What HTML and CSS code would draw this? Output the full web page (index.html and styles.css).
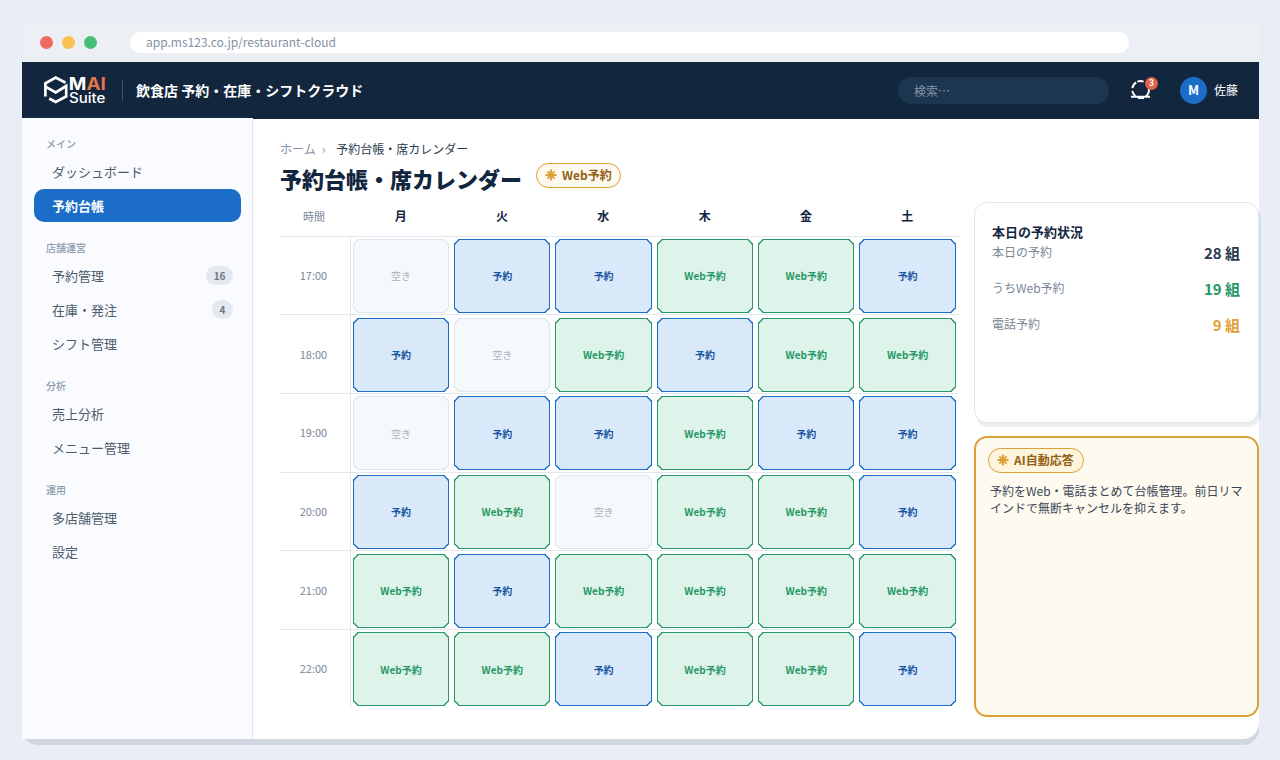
FILE: index.html
```html
<!DOCTYPE html>
<html lang="ja">
<head>
<meta charset="utf-8">
<title>予約台帳・席カレンダー</title>
<link rel="stylesheet" href="styles.css">
</head>
<body>
<div class="window">
  <div class="chrome">
    <i class="dot red"></i><i class="dot yellow"></i><i class="dot green"></i>
    <div class="url">app.ms123.co.jp/restaurant-cloud</div>
  </div>
  <header class="topbar">
    <svg class="logo" width="64" height="32" viewBox="0 0 64 32">
      <g fill="none" stroke="#fff" stroke-width="2.7">
        <path d="M23.6 8.8 13.7 3.6 3.4 9.3v13.2"/>
        <path d="M3.4 12.6 13.7 18.4 24.2 12v10.4L13.7 28 7.2 24.5"/>
      </g>
      <text class="logo-mai" x="26.8" y="16.2" textLength="37" lengthAdjust="spacingAndGlyphs">M<tspan fill="#e0784a">AI</tspan></text>
      <text class="logo-suite" x="27" y="29.3" textLength="36.4" lengthAdjust="spacingAndGlyphs">Suite</text>
    </svg>
    <i class="divider"></i>
    <div class="product">飲食店 予約・在庫・シフトクラウド</div>
    <div class="search">検索…</div>
    <div class="bell">
      <svg width="22" height="22" viewBox="0 0 22 22" fill="none" stroke="#fff" stroke-width="1.9">
        <path d="M2.3 9.2A8.4 8.4 0 0 1 6.2 3.4M7.4 2.6a8.4 8.4 0 0 1 6.2 0M18.8 9.4a8.4 8.4 0 0 1-2.8 7.8M2.3 11.8a8.4 8.4 0 0 0 3 5.2M1 17.7h19M8 19h6"/>
      </svg>
      <span class="count">3</span>
    </div>
    <div class="avatar">M</div>
    <div class="user">佐藤</div>
  </header>
  <div class="body">
    <nav class="sidebar">
      <div class="group">
        <div class="label">メイン</div>
        <div class="item">ダッシュボード</div>
        <div class="item active">予約台帳</div>
      </div>
      <div class="group">
        <div class="label">店舗運営</div>
        <div class="item">予約管理<span class="badge">16</span></div>
        <div class="item">在庫・発注<span class="badge">4</span></div>
        <div class="item">シフト管理</div>
      </div>
      <div class="group">
        <div class="label">分析</div>
        <div class="item">売上分析</div>
        <div class="item">メニュー管理</div>
      </div>
      <div class="group">
        <div class="label">運用</div>
        <div class="item">多店舗管理</div>
        <div class="item">設定</div>
      </div>
    </nav>
    <main class="main">
      <div class="crumbs"><span>ホーム</span><span class="sep">›</span><span class="here">予約台帳・席カレンダー</span></div>
      <div class="heading">
        <h1>予約台帳・席カレンダー</h1>
        <div class="pill"><svg class="spark" viewBox="0 0 12 12"><path d="M6 .5v11M.5 6h11M2.4 2.4l7.2 7.2M9.6 2.4 2.4 9.6"/></svg>Web予約</div>
      </div>
      <div class="columns">
        <section class="calendar">
          <div class="row head"><div class="time">時間</div><div class="day">月</div><div class="day">火</div><div class="day">水</div><div class="day">木</div><div class="day">金</div><div class="day">土</div></div>
          <div class="row"><div class="time">17:00</div><div class="cell free">空き</div><div class="cell booked">予約</div><div class="cell booked">予約</div><div class="cell web">Web予約</div><div class="cell web">Web予約</div><div class="cell booked">予約</div></div>
          <div class="row"><div class="time">18:00</div><div class="cell booked">予約</div><div class="cell free">空き</div><div class="cell web">Web予約</div><div class="cell booked">予約</div><div class="cell web">Web予約</div><div class="cell web">Web予約</div></div>
          <div class="row"><div class="time">19:00</div><div class="cell free">空き</div><div class="cell booked">予約</div><div class="cell booked">予約</div><div class="cell web">Web予約</div><div class="cell booked">予約</div><div class="cell booked">予約</div></div>
          <div class="row"><div class="time">20:00</div><div class="cell booked">予約</div><div class="cell web">Web予約</div><div class="cell free">空き</div><div class="cell web">Web予約</div><div class="cell web">Web予約</div><div class="cell booked">予約</div></div>
          <div class="row"><div class="time">21:00</div><div class="cell web">Web予約</div><div class="cell booked">予約</div><div class="cell web">Web予約</div><div class="cell web">Web予約</div><div class="cell web">Web予約</div><div class="cell web">Web予約</div></div>
          <div class="row"><div class="time">22:00</div><div class="cell web">Web予約</div><div class="cell web">Web予約</div><div class="cell booked">予約</div><div class="cell web">Web予約</div><div class="cell web">Web予約</div><div class="cell booked">予約</div></div>
        </section>
        <aside class="side">
          <section class="card">
            <h2>本日の予約状況</h2>
            <div class="stat"><span>本日の予約</span><b>28 組</b></div>
            <div class="stat"><span>うちWeb予約</span><b class="ok">19 組</b></div>
            <div class="stat"><span>電話予約</span><b class="warn">9 組</b></div>
          </section>
          <section class="card ai">
            <div class="pill deep"><svg class="spark" viewBox="0 0 12 12"><path d="M6 .5v11M.5 6h11M2.4 2.4l7.2 7.2M9.6 2.4 2.4 9.6"/></svg>AI自動応答</div>
            <p>予約をWeb・電話まとめて台帳管理。前日リマインドで無断キャンセルを抑えます。</p>
          </section>
        </aside>
      </div>
    </main>
  </div>
</div>
</body>
</html>
```
FILE: styles.css
```css
* { box-sizing: border-box; }
body {
  margin: 0;
  padding: 22px 21px 0 22px;
  height: 760px;
  overflow: hidden;
  background: #e9eef6;
  color: #12263d;
  font-family: "Noto Sans CJK JP", sans-serif;
  font-size: 12px;
}
.window {
  width: 1237px;
  height: 717px;
  display: flex;
  flex-direction: column;
  background: #fff;
  border-radius: 0 0 16px 16px;
  box-shadow: 0 6px 0 #d0d7df;
}
.chrome {
  height: 40px;
  flex: none;
  display: flex;
  align-items: center;
  gap: 9px;
  padding-left: 18px;
  background: #ecf0f4;
}
.dot { width: 13px; height: 13px; border-radius: 50%; }
.red { background: #ee6a5f; }
.yellow { background: #f8c150; }
.green { background: #48bf78; }
.url {
  width: 999px;
  height: 21px;
  margin-left: 24px;
  padding-left: 16px;
  border-radius: 11px;
  background: #fff;
  color: #8492a3;
  line-height: 20px;
}
.topbar {
  height: 57px;
  flex: none;
  display: flex;
  align-items: center;
  padding: 0 21px 1px 20px;
  background: #12263d;
  color: #fff;
}
.logo { flex: none; }
.logo-mai { font: 700 18px Inter, sans-serif; fill: #fff; }
.logo-suite { font: 500 14px Inter, sans-serif; fill: #fff; }
.divider { width: 1px; height: 21px; margin: 0 13px 0 16px; background: #41526a; }
.product { font-size: 14px; font-weight: 700; }
.search {
  width: 211px;
  height: 27px;
  margin-left: auto;
  padding-left: 16px;
  border-radius: 14px;
  background: #1d3650;
  color: #8493a5;
  line-height: 27px;
}
.bell { position: relative; width: 22px; height: 22px; margin: 0 28px 0 21px; }
.bell svg { display: block; }
.count {
  position: absolute;
  top: -2px;
  right: -6px;
  width: 13px;
  height: 13px;
  border-radius: 50%;
  background: #e0614c;
  font-size: 9px;
  font-weight: 700;
  line-height: 12px;
  text-align: center;
}
.avatar {
  width: 27px;
  height: 27px;
  border-radius: 50%;
  background: #1b6dc7;
  font-size: 13px;
  font-weight: 700;
  line-height: 26px;
  text-align: center;
}
.user { margin-left: 7px; padding-bottom: 1px; }
.body { flex: 1; display: flex; min-height: 0; }
.sidebar {
  width: 231px;
  flex: none;
  margin-top: -1px;
  padding: 15px 11px 0 12px;
  border-right: 1px solid #e1e7ee;
  background: #f9fbff;
}
.group { margin-bottom: 15px; }
.label {
  height: 22px;
  padding-left: 12px;
  color: #8d9bab;
  font-size: 10px;
  font-weight: 500;
  line-height: 21px;
}
.item {
  display: flex;
  justify-content: space-between;
  align-items: center;
  height: 33px;
  margin-bottom: 1px;
  padding: 0 8px 0 18px;
  border-radius: 10px;
  color: #4d5b6b;
  font-size: 13px;
}
.active { background: #1b6dc7; color: #fff; font-weight: 700; }
.badge {
  padding: 0 7.5px;
  border-radius: 10px;
  background: #e3e9ef;
  color: #6b7887;
  font-size: 10px;
  font-weight: 700;
  line-height: 19px;
}
.main { flex: 1; padding: 20px 0 0 27px; }
.crumbs { height: 20px; display: flex; color: #8492a3; line-height: 20px; }
.sep { margin: 0 11px 0 6px; }
.here { color: #2a3a4e; }
.heading { height: 43px; display: flex; align-items: flex-start; }
h1 { margin: 3px 14px 0 0; font-size: 22px; font-weight: 900; line-height: 32px; }
.pill {
  display: flex;
  align-items: center;
  width: max-content;
  height: 25px;
  margin-top: 4px;
  padding: 0 8px 2px 8px;
  border: 1px solid #dda036;
  border-radius: 13px;
  background: #fefaf0;
  color: #946014;
  font-weight: 700;
}
.spark { width: 12px; height: 12px; margin: 1px 5px 0 0; fill: none; stroke: #dda036; stroke-width: 1.9; }
.columns { display: flex; gap: 15px; }
.calendar { width: 679px; }
.row {
  display: grid;
  grid-template-columns: 71px repeat(6, 1fr);
  height: 78.65px;
  border-top: 1px solid #e1e7ee;
}
.head { height: 33.8px; border: 0; }
.time {
  display: flex;
  align-items: center;
  justify-content: center;
  padding: 0 3px 1px 0;
  border-right: 1px solid #e1e7ee;
  color: #7a8796;
  font-size: 11px;
}
.head .time, .day { height: 28px; border: 0; line-height: 28px; text-align: center; }
.day { padding-right: 2px; font-weight: 700; }
.cell {
  display: flex;
  align-items: center;
  justify-content: center;
  margin: 2.2px 3.2px 1.5px 1.8px;
  border: 1px solid;
  border-radius: 5px;
  corner-shape: bevel;
  font-size: 10px;
  font-weight: 700;
}
.free { background: #f5f9fc; border-color: #e1e7ee; color: #a9b3bf; font-weight: 400; }
.booked { background: #dae9fa; border-color: #1b6dc7; color: #1855a0; }
.web { background: #def3e9; border-color: #279967; color: #279967; }
.side { width: 285px; display: flex; flex-direction: column; gap: 13px; }
.card {
  height: 221px;
  padding: 18px 18px 0 17px;
  border: 1px solid #e1e7ee;
  border-radius: 13px;
  background: #fff;
  box-shadow: 2px 4px 0 rgba(18, 38, 61, .08);
}
h2 { margin: 0; font-size: 13px; font-weight: 700; line-height: 21px; }
.stat { display: flex; justify-content: space-between; height: 36px; color: #7a8796; line-height: 20px; }
.stat b { color: #2a3a4e; font-size: 15px; line-height: 22px; }
.stat b.ok { color: #279967; }
.stat b.warn { color: #e0a03a; }
.ai { height: 281px; padding: 10px 12px 0; border: 2px solid #dda036; background: #fefaf0; box-shadow: none; }
.deep { margin: 0; padding-right: 9px; background: #fff4dc; }
.ai p { margin: 9px 0 0 2px; color: #3a4655; line-height: 17px; }
```
